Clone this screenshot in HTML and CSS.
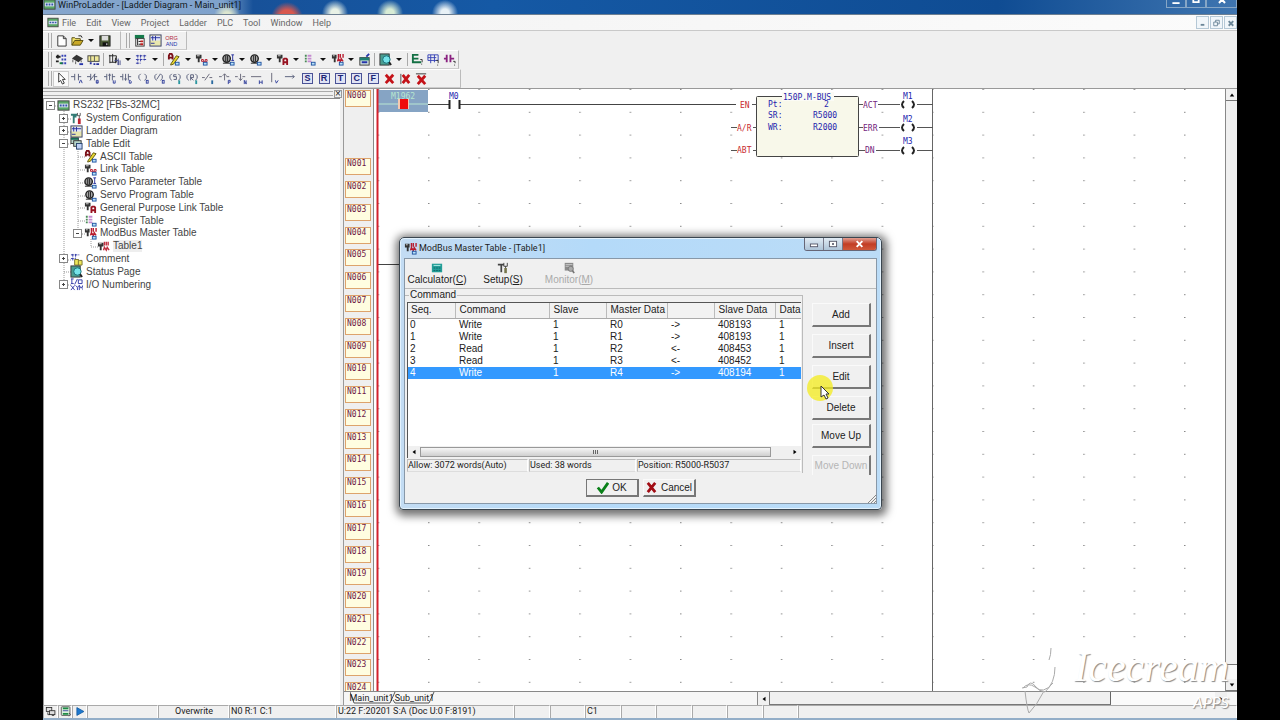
FILE: index.html
```html
<!DOCTYPE html>
<html lang="en">
<head>
<meta charset="utf-8">
<title>WinProLadder - [Ladder Diagram - Main_unit1]</title>
<link rel="stylesheet" href="styles.css">
</head>
<body>
<svg class="sprite" aria-hidden="true">
  <defs>
    <symbol id="plc" viewBox="0 0 14 14"><rect x="1" y="2" width="12" height="10" fill="#5aa868" stroke="#444"/><rect x="2" y="5" width="10" height="4" fill="#dfe6f4"/><path d="M3 7h8" stroke="#3355aa" stroke-width="2" stroke-dasharray="2 1"/></symbol>
    <symbol id="new" viewBox="0 0 14 14"><path d="M3 2h6l3 3v8H3z" fill="#fff" stroke="#333"/><path d="M9 2v3h3" fill="none" stroke="#333"/></symbol>
    <symbol id="open" viewBox="0 0 14 14"><path d="M1 12V4h3l1 1h5v2" fill="#f3e36b" stroke="#554d10"/><path d="M1 12l3-5h9l-3 5z" fill="#c9a927" stroke="#554d10"/><path d="M8 2h3l1 2" fill="none" stroke="#222"/></symbol>
    <symbol id="save" viewBox="0 0 14 14"><rect x="2" y="2" width="11" height="11" fill="#4a5a35" stroke="#222"/><rect x="4" y="2" width="7" height="5" fill="#dcdcdc"/><rect x="5" y="9" width="6" height="4" fill="#111"/><rect x="9" y="10" width="1" height="2" fill="#fff"/></symbol>
    <symbol id="project" viewBox="0 0 14 14"><rect x="2" y="1" width="10" height="4" fill="#157a4b"/><rect x="3" y="5" width="9" height="8" fill="#fff" stroke="#333"/><path d="M5 5v7M6 8h3M6 11h3" stroke="#111"/><path d="M8 8h3M8 11h3" stroke="#c12020" stroke-width="2"/></symbol>
    <symbol id="ladder" viewBox="0 0 14 14"><rect x="1" y="1" width="12" height="12" fill="#e8e6ad" stroke="#333a66"/><rect x="2" y="2" width="10" height="5" fill="#dfe3fa"/><path d="M2 4h10M4 2v5M7 2v5M2 10h4" stroke="#26309c"/></symbol>
    <symbol id="mnemonic" viewBox="0 0 14 14"><text x="7" y="6" text-anchor="middle" font-size="6" fill="#b32a3c">ORG</text><text x="7" y="13" text-anchor="middle" font-size="6" fill="#2634aa">AND</text></symbol>
    <symbol id="netgrid" viewBox="0 0 14 14"><path d="M1 4h5M3 2v4M1 9h3" stroke="#222" stroke-width="2"/><path d="M7 3h6M7 7h6M7 11h6" stroke="#3440b4" stroke-width="2" stroke-dasharray="2 1"/><path d="M5 11h3" stroke="#15803d" stroke-width="2"/></symbol>
    <symbol id="chip" viewBox="0 0 14 14"><path d="M1 6l5-4 7 4-5 4z" fill="#333"/><path d="M2 7v3M5 9v3M11 8v2" stroke="#555"/><path d="M9 12h4" stroke="#2634aa" stroke-width="2"/></symbol>
    <symbol id="io" viewBox="0 0 14 14"><rect x="1" y="3" width="12" height="6" fill="#efe99a" stroke="#444"/><path d="M4 3v6M8 3v6" stroke="#555"/><path d="M3 11h2M7 12h2M10 12h3" stroke="#26309c" stroke-width="2"/></symbol>
    <symbol id="unit" viewBox="0 0 14 14"><path d="M2 2v9M1 3h8v7H2M5 1v9M8 5v6" fill="none" stroke="#222"/><path d="M7 8h4v5M11 6v7M13 8v5" fill="none" stroke="#444c88"/></symbol>
    <symbol id="rung" viewBox="0 0 14 14"><path d="M1 3h11M1 7h11M3 2v10M6 2v8M10 2v6M1 11h5" stroke="#3038a5" fill="none" stroke-dasharray="3 1"/></symbol>
    <symbol id="ascii" viewBox="0 0 14 14"><path d="M2 7V3l1-2h2l1 2v4M2 5h4" fill="none" stroke="#7b1018" stroke-width="2"/><path d="M4 12l6-9 3 1-6 8-3 1z" fill="#e6d631" stroke="#5d5510"/><rect x="9" y="10" width="4" height="3" fill="#b7e1f7" stroke="#2052a2"/></symbol>
    <symbol id="link" viewBox="0 0 14 14"><path d="M1 2h6v4H5v4H3V6H1z" fill="#333"/><path d="M2 3h3" stroke="#ddd"/><path d="M7 9V7h2v2M11 9V7h2v2" fill="none" stroke="#b81c2f"/><path d="M7 9h6" stroke="#b81c2f"/><rect x="9" y="10" width="4" height="3" fill="#b7e1f7" stroke="#2052a2"/></symbol>
    <symbol id="servoi" viewBox="0 0 14 14"><circle cx="5" cy="6" r="4" fill="#999" stroke="#222" stroke-width="1.500"/><path d="M4 3v6M6 3v6M1 11h8" stroke="#222"/><path d="M10 2h3M11.500 2v6M10 8h3" stroke="#26309c"/><rect x="9" y="10" width="4" height="3" fill="#b7e1f7" stroke="#2052a2"/></symbol>
    <symbol id="servo" viewBox="0 0 14 14"><circle cx="6" cy="6" r="4" fill="#aaa" stroke="#222" stroke-width="1.500"/><path d="M5 3v6M7 3v6M2 11h8" stroke="#222"/><rect x="9" y="10" width="4" height="3" fill="#b7e1f7" stroke="#2052a2"/></symbol>
    <symbol id="general" viewBox="0 0 14 14"><path d="M1 2h6v4H5v4H3V6H1z" fill="#333"/><path d="M2 3h3" stroke="#ddd"/><path d="M8 13V7l1-1h2l1 1v6M8 10h4" fill="none" stroke="#981221" stroke-width="2"/></symbol>
    <symbol id="register" viewBox="0 0 14 14"><path d="M2 3h2M2 6h2M2 9h2" stroke="#4a8a57" stroke-width="2"/><path d="M5 3h4M5 6h4M5 9h4" stroke="#c58ad0" stroke-width="2"/><rect x="9" y="10" width="4" height="3" fill="#b7e1f7" stroke="#2052a2"/></symbol>
    <symbol id="modbus" viewBox="0 0 14 14"><path d="M1 2h5v4H5v4H3V6H1z" fill="#333"/><path d="M2 3h2" stroke="#ddd"/><path d="M8 1v4M10 1v4M13 1v4M7 9l1-3 2 3 1-3 2 3" fill="none" stroke="#b81c2f" stroke-width="1.500"/><rect x="9" y="10" width="4" height="3" fill="#b7e1f7" stroke="#2052a2"/></symbol>
    <symbol id="modsmall" viewBox="0 0 14 14"><path d="M1 3h6v4H5v4H3V7H1z" fill="#333"/><path d="M2 4h3" stroke="#ddd"/><path d="M8 2v4M10 2v4M12 2v4M7 11l1-3 2 3 1-3 2 3" fill="none" stroke="#c03040" stroke-width="1.500"/></symbol>
    <symbol id="calcset" viewBox="0 0 14 14"><rect x="2" y="5" width="10" height="8" fill="#d7e7e3" stroke="#333"/><rect x="2" y="5" width="10" height="3" fill="#1e8072"/><path d="M9 4l3-3M4 10h6" stroke="#2634aa" stroke-width="2"/></symbol>
    <symbol id="status" viewBox="0 0 14 14"><rect x="1" y="1" width="10" height="12" fill="#4a9d90" stroke="#333"/><circle cx="8" cy="7" r="4" fill="#75e3e8" stroke="#176b76"/><path d="M11 10l2 3" stroke="#222" stroke-width="2"/></symbol>
    <symbol id="cmt" viewBox="0 0 14 14"><path d="M2 2h6M2 6h6M2 10h9M2 1v10" stroke="#147044" stroke-width="2"/><path d="M10 7h2v3M11 12h1" stroke="#333" fill="none"/></symbol>
    <symbol id="find" viewBox="0 0 14 14"><path d="M1 2h11v6H1zM4 2v9M8 2v8M1 5h9" fill="none" stroke="#3440b4"/><path d="M10 8h2v3M11 13h1" fill="none" stroke="#333"/></symbol>
    <symbol id="contact" viewBox="0 0 14 14"><path d="M1 6h3M4 2v8M8 2v8M8 6h4" stroke="#8a2180" stroke-width="2"/><path d="M11 9h2v2M12 13h1" fill="none" stroke="#333"/></symbol>
    <symbol id="pointer" viewBox="0 0 14 14"><path d="M4 1v10l2-2 2 4 2-1-2-4h3z" fill="#fff" stroke="#333"/></symbol>
    <symbol id="no" viewBox="0 0 14 14"><path d="M0 5h4M4 2v7M8 2v7M8 5h3" stroke="#555c78" fill="none"/><path d="M9 12l1-3h1l1 3" stroke="#32409c" fill="none"/></symbol>
    <symbol id="nc" viewBox="0 0 14 14"><path d="M0 5h4M4 2v7M8 2v7M8 5h3M3 9l6-7" stroke="#555c78" fill="none"/><path d="M10 9h2v3h-2zM10 11h2" stroke="#32409c" fill="none"/></symbol>
    <symbol id="up" viewBox="0 0 14 14"><path d="M0 5h3M3 2v7M6 2v7M9 2v7M9 5h3M5 4l1-2 1 2" stroke="#555c78" fill="none"/><path d="M10 9v3h2V9" stroke="#32409c" fill="none"/></symbol>
    <symbol id="down" viewBox="0 0 14 14"><path d="M0 5h3M3 2v7M6 2v7M9 2v7M9 5h3M5 7l1 2 1-2" stroke="#555c78" fill="none"/><path d="M10 9h1l1 1v2h-2z" stroke="#32409c" fill="none"/></symbol>
    <symbol id="coil" viewBox="0 0 14 14"><path d="M4 2L2 4v3l2 2M8 2l2 2v3L8 9" stroke="#555c78" fill="none"/><rect x="10" y="9" width="2" height="3" stroke="#32409c" fill="none"/></symbol>
    <symbol id="coilnot" viewBox="0 0 14 14"><path d="M4 2L2 4v3l2 2M8 2l2 2v3L8 9M4 8l4-6" stroke="#555c78" fill="none"/><rect x="10" y="9" width="2" height="3" stroke="#32409c" fill="none"/></symbol>
    <symbol id="coilset" viewBox="0 0 14 14"><path d="M3 2L1 4v3l2 2M10 2l2 2v3l-2 2M8 3H5v2h3v3H5" stroke="#555c78" fill="none"/><path d="M11 9v4" stroke="#2a97a0" stroke-width="2"/></symbol>
    <symbol id="coilreset" viewBox="0 0 14 14"><path d="M3 2L1 4v3l2 2M10 2l2 2v3l-2 2M5 9V3h3v3H5l3 3" stroke="#555c78" fill="none"/><path d="M11 9v4" stroke="#2a97a0" stroke-width="2"/></symbol>
    <symbol id="inv" viewBox="0 0 14 14"><path d="M0 6h3M3 9l5-7M8 6h3" stroke="#667" fill="none"/><path d="M11 9v4" stroke="#2a6aa0" stroke-width="2"/></symbol>
    <symbol id="pulse" viewBox="0 0 14 14"><path d="M0 5h3M8 5h3M6 9V2M4 4l2-2 2 2" stroke="#667" fill="none"/><path d="M10 13V9h2v2h-2" stroke="#32409c" fill="none"/></symbol>
    <symbol id="pulsed" viewBox="0 0 14 14"><path d="M0 5h3M8 5h3M6 9V2M4 7l2 2 2-2" stroke="#667" fill="none"/><path d="M10 13V9l2 4V9" stroke="#32409c" fill="none"/></symbol>
    <symbol id="hline" viewBox="0 0 14 14"><path d="M0 5h11" stroke="#667"/><path d="M9 9v4M12 9v4M9 11h3" stroke="#32409c"/></symbol>
    <symbol id="vline" viewBox="0 0 14 14"><path d="M4 1v10" stroke="#667"/><path d="M8 9l1 3 2-3" stroke="#32409c" fill="none"/></symbol>
    <symbol id="arrow" viewBox="0 0 14 14"><path d="M1 5h10M9 3l2 2-2 2" stroke="#555c78" fill="none"/></symbol>
    <symbol id="cross" viewBox="0 0 14 14"><path d="M3 3l8 9M11 3l-8 9" stroke="#c41218" stroke-width="3"/></symbol>
    <symbol id="crossv" viewBox="0 0 14 14"><path d="M2 2v11" stroke="#444"/><path d="M4 3l7 9M11 3l-7 9" stroke="#c41218" stroke-width="3"/></symbol>
    <symbol id="crossh" viewBox="0 0 14 14"><path d="M1 2h11" stroke="#333"/><path d="M3 4l8 9M11 4l-8 9" stroke="#c41218" stroke-width="3"/></symbol>
    <symbol id="config" viewBox="0 0 14 14"><path d="M1 3h7M4 3v9M6 3v3" stroke="#347c76" stroke-width="2"/><path d="M8 1v3h3V1M10 4v4" stroke="#555" fill="none"/><path d="M10 7v6" stroke="#bd2330" stroke-width="3"/></symbol>
    <symbol id="tables" viewBox="0 0 14 14"><rect x="1" y="1" width="8" height="6" fill="#b8d5ca" stroke="#333"/><path d="M1 2h8" stroke="#176b58" stroke-width="2"/><rect x="4" y="4" width="8" height="6" fill="#b8d5ca" stroke="#333"/><rect x="7" y="7" width="6" height="6" fill="#bfd0f4" stroke="#26426f"/></symbol>
    <symbol id="comment" viewBox="0 0 14 14"><path d="M1 2h9M3 1v8M6 1v5M1 6h5" stroke="#3038a5" stroke-dasharray="3 1"/><path d="M5 7h4l1 1h3v5H5zM9 7v6" fill="#eee75a" stroke="#77702b"/></symbol>
    <symbol id="ionum" viewBox="0 0 14 14"><path d="M1 1h3M2 1v5M1 6h3M5 7l3-6M9 2h4v4H9zM1 8l4 5M5 8l-4 5M6 8l2 2 2-2M8 10v3M10 13V8l2 3 2-3v5" stroke="#3038a5" fill="none"/></symbol>
    <symbol id="calc" viewBox="0 0 14 14"><rect x="1" y="2" width="12" height="10" fill="#239e98"/><path d="M3 4h8" stroke="#bff5ef"/><path d="M3 7h8M3 10h8" stroke="#085f62" stroke-dasharray="2 1"/></symbol>
    <symbol id="setup" viewBox="0 0 14 14"><path d="M1 3h7M5 3v9" stroke="#444" stroke-width="2"/><path d="M8 1v4h4V1M10 5v2" stroke="#333" fill="none"/><path d="M10 7v6" stroke="#76754b" stroke-width="3"/></symbol>
    <symbol id="monitor" viewBox="0 0 14 14"><rect x="2" y="1" width="10" height="9" fill="#8b8b8b"/><path d="M3 3h8M3 5h5" stroke="#ccc"/><circle cx="9" cy="8" r="3" fill="#aaa" stroke="#777"/><path d="M11 10l2 3" stroke="#777" stroke-width="2"/></symbol>
    <symbol id="tick" viewBox="0 0 14 14"><path d="M2 7l4 5 7-10" fill="none" stroke="#098018" stroke-width="3"/></symbol>
    <symbol id="ex" viewBox="0 0 14 14"><path d="M3 2l8 10M11 2L3 12" stroke="#a10c14" stroke-width="3"/></symbol>
    <symbol id="net" viewBox="0 0 14 14"><rect x="1" y="2" width="7" height="5" fill="#ddd" stroke="#222"/><rect x="5" y="6" width="7" height="5" fill="#ddd" stroke="#222"/><path d="M3 8v3h2M8 12h3" stroke="#222" fill="none"/></symbol>
    <symbol id="online" viewBox="0 0 14 14"><rect x="1" y="1" width="11" height="11" rx="1" fill="#d9efdc" stroke="#444"/><path d="M3 3h7M3 10h7" stroke="#1d8a45" stroke-width="2"/><path d="M3 6h7" stroke="#26309c"/><path d="M11 9l2 2-2 2" stroke="#333" fill="none"/></symbol>
    <symbol id="play" viewBox="0 0 14 14"><path d="M3 2l9 5-9 5z" fill="#1d78cf" stroke="#135a9f"/></symbol>
  </defs>
</svg>

<div class="app">
  <header class="titlebar">
    <svg class="icon"><use href="#plc"/></svg>
    <h1 class="title">WinProLadder - [Ladder Diagram - Main_unit1]</h1>
    <div class="caption">
      <button aria-label="Minimize"><svg viewBox="0 0 20 10"><path d="M6 4h8" stroke="#fff" stroke-width="2"/></svg></button>
      <button aria-label="Maximize"><svg viewBox="0 0 20 10"><path d="M7 -3h6v6H7z" fill="none" stroke="#fff" stroke-width="2"/></svg></button>
      <button class="wide" aria-label="Close"><svg viewBox="0 0 20 10"><path d="M7 -3l6 7M13 -3l-6 7" stroke="#fff" stroke-width="2"/></svg></button>
    </div>
  </header>

  <nav class="menubar">
    <svg class="icon"><use href="#plc"/></svg>
    <button>File</button><button>Edit</button><button>View</button><button>Project</button><button>Ladder</button><button>PLC</button><button>Tool</button><button>Window</button><button>Help</button>
    <div class="child-caption">
      <button aria-label="Minimize child"><svg viewBox="0 0 12 12"><path d="M4 8h4" stroke="#6b8698" stroke-width="2"/></svg></button>
      <button aria-label="Restore child"><svg viewBox="0 0 12 12"><path d="M3 5h4v4H3zM5 5V3h4v4H7" fill="none" stroke="#6b8698"/></svg></button>
      <button aria-label="Close child"><svg viewBox="0 0 12 12"><path d="M4 4l5 5M9 4l-5 5" stroke="#6b8698" stroke-width="2"/></svg></button>
    </div>
  </nav>

  <div class="toolbars">
    <div class="bar-row">
      <div class="bar bar-file">
        <i class="grip"></i>
        <button class="tool" aria-label="New"><svg><use href="#new"/></svg></button>
        <button class="tool" aria-label="Open"><svg><use href="#open"/></svg></button><button class="drop" aria-label="Recent"></button>
        <button class="tool" aria-label="Save"><svg><use href="#save"/></svg></button>
      </div>
      <div class="bar">
        <i class="grip"></i>
        <button class="tool" aria-label="Project"><svg><use href="#project"/></svg></button>
        <button class="tool" aria-label="Ladder"><svg><use href="#ladder"/></svg></button>
        <button class="tool" aria-label="Mnemonic"><svg><use href="#mnemonic"/></svg></button>
      </div>
    </div>
    <div class="bar-row">
      <div class="bar bar-tables">
        <i class="grip"></i>
        <button class="tool" aria-label="Configuration"><svg><use href="#netgrid"/></svg></button>
        <button class="tool" aria-label="Memory"><svg><use href="#chip"/></svg></button>
        <button class="tool" aria-label="I/O"><svg><use href="#io"/></svg></button>
        <i class="sep"></i>
        <button class="tool" aria-label="Unit"><svg><use href="#unit"/></svg></button><button class="drop" aria-label="Unit list"></button>
        <button class="tool" aria-label="Network"><svg><use href="#rung"/></svg></button><button class="drop" aria-label="Network list"></button>
        <i class="sep"></i>
        <button class="tool" aria-label="ASCII"><svg><use href="#ascii"/></svg></button><button class="drop" aria-label="ASCII list"></button>
        <button class="tool" aria-label="Link"><svg><use href="#link"/></svg></button><button class="drop" aria-label="Link list"></button>
        <button class="tool" aria-label="Servo parameter"><svg><use href="#servoi"/></svg></button><button class="drop" aria-label="Servo parameter list"></button>
        <button class="tool" aria-label="Servo program"><svg><use href="#servo"/></svg></button><button class="drop" aria-label="Servo program list"></button>
        <button class="tool" aria-label="General link"><svg><use href="#general"/></svg></button><button class="drop" aria-label="General link list"></button>
        <button class="tool" aria-label="Register"><svg><use href="#register"/></svg></button><button class="drop" aria-label="Register list"></button>
        <button class="tool" aria-label="ModBus"><svg><use href="#modbus"/></svg></button><button class="drop" aria-label="ModBus list"></button>
        <button class="tool" aria-label="Calculator"><svg><use href="#calcset"/></svg></button>
        <i class="sep"></i>
        <button class="tool" aria-label="Status page"><svg><use href="#status"/></svg></button><button class="drop" aria-label="Status list"></button>
        <i class="sep"></i>
        <button class="tool" aria-label="Comment"><svg><use href="#cmt"/></svg></button>
        <button class="tool" aria-label="Find network"><svg><use href="#find"/></svg></button>
        <button class="tool" aria-label="Find element"><svg><use href="#contact"/></svg></button>
      </div>
    </div>
    <div class="bar-row">
      <div class="bar bar-elements">
        <i class="grip"></i>
        <div class="elements">
          <button class="tool pressed" aria-label="Select"><svg><use href="#pointer"/></svg></button>
          <button class="tool" aria-label="Contact A"><svg><use href="#no"/></svg></button>
          <button class="tool" aria-label="Contact B"><svg><use href="#nc"/></svg></button>
          <button class="tool" aria-label="Contact up"><svg><use href="#up"/></svg></button>
          <button class="tool" aria-label="Contact down"><svg><use href="#down"/></svg></button>
          <button class="tool" aria-label="Coil"><svg><use href="#coil"/></svg></button>
          <button class="tool" aria-label="Inverse coil"><svg><use href="#coilnot"/></svg></button>
          <button class="tool" aria-label="Set coil"><svg><use href="#coilset"/></svg></button>
          <button class="tool" aria-label="Reset coil"><svg><use href="#coilreset"/></svg></button>
          <button class="tool" aria-label="Invert"><svg><use href="#inv"/></svg></button>
          <button class="tool" aria-label="Rising"><svg><use href="#pulse"/></svg></button>
          <button class="tool" aria-label="Falling"><svg><use href="#pulsed"/></svg></button>
          <button class="tool" aria-label="Horizontal"><svg><use href="#hline"/></svg></button>
          <button class="tool" aria-label="Vertical"><svg><use href="#vline"/></svg></button>
          <button class="tool" aria-label="Extend"><svg><use href="#arrow"/></svg></button>
          <button class="tool letter">S</button>
          <button class="tool letter">R</button>
          <button class="tool letter">T</button>
          <button class="tool letter">C</button>
          <button class="tool letter">F</button>
          <button class="tool" aria-label="Delete"><svg><use href="#cross"/></svg></button>
          <button class="tool" aria-label="Delete vertical"><svg><use href="#crossv"/></svg></button>
          <button class="tool" aria-label="Delete horizontal"><svg><use href="#crossh"/></svg></button>
        </div>
      </div>
    </div>
  </div>

  <main class="work">
    <aside class="dock">
      <div class="dock-head"><i class="dock-grip"></i><button aria-label="Close pane">×</button></div>
      <div class="tree-pane">
        <svg class="guides" aria-hidden="true"><path d="M11 7h6M20 12v174M20 20h8M20 33h8M20 45h8M20 161h8M20 173h8M20 186h8M34 50v85M34 58h8M34 71h8M34 84h8M34 97h8M34 109h8M34 122h8M34 135h8M47 140v8M47 148h8"/></svg>
        <ul class="tree">
          <li><b class="box minus"></b><svg><use href="#plc"/></svg><span>RS232 [FBs-32MC]</span></li>
          <li class="l1"><b class="box plus"></b><svg><use href="#config"/></svg><span>System Configuration</span></li>
          <li class="l1"><b class="box plus"></b><svg><use href="#ladder"/></svg><span>Ladder Diagram</span></li>
          <li class="l1"><b class="box minus"></b><svg><use href="#tables"/></svg><span>Table Edit</span></li>
          <li class="l2"><b></b><svg><use href="#ascii"/></svg><span>ASCII Table</span></li>
          <li class="l2"><b></b><svg><use href="#link"/></svg><span>Link Table</span></li>
          <li class="l2"><b></b><svg><use href="#servoi"/></svg><span>Servo Parameter Table</span></li>
          <li class="l2"><b></b><svg><use href="#servo"/></svg><span>Servo Program Table</span></li>
          <li class="l2"><b></b><svg><use href="#general"/></svg><span>General Purpose Link Table</span></li>
          <li class="l2"><b></b><svg><use href="#register"/></svg><span>Register Table</span></li>
          <li class="l2"><b class="box minus"></b><svg><use href="#modbus"/></svg><span>ModBus Master Table</span></li>
          <li class="l3"><b></b><svg><use href="#modsmall"/></svg><span class="current">Table1</span></li>
          <li class="l1"><b class="box plus"></b><svg><use href="#comment"/></svg><span>Comment</span></li>
          <li class="l1"><b></b><svg><use href="#status"/></svg><span>Status Page</span></li>
          <li class="l1"><b class="box plus"></b><svg><use href="#ionum"/></svg><span>I/O Numbering</span></li>
        </ul>
      </div>
    </aside>

    <section class="editor">
      <div class="sheet">
        <div class="rownums">
          <ol class="rows">
            <li class="first"><span>N000</span></li><li><span>N001</span></li><li><span>N002</span></li><li><span>N003</span></li><li><span>N004</span></li><li><span>N005</span></li><li><span>N006</span></li><li><span>N007</span></li><li><span>N008</span></li><li><span>N009</span></li><li><span>N010</span></li><li><span>N011</span></li><li><span>N012</span></li><li><span>N013</span></li><li><span>N014</span></li><li><span>N015</span></li><li><span>N016</span></li><li><span>N017</span></li><li><span>N018</span></li><li><span>N019</span></li><li><span>N020</span></li><li><span>N021</span></li><li><span>N022</span></li><li><span>N023</span></li><li><span>N024</span></li>
          </ol>
        </div>
        <svg class="diagram" role="img" aria-label="Ladder diagram">
          <defs><pattern id="dots" x="54" y="0" width="50.4" height="22.8" patternUnits="userSpaceOnUse"><rect x="0" y="0" width="1.5" height="1" fill="#888"/></pattern></defs>
          <rect width="100%" height="100%" fill="url(#dots)"/>
          <rect x="4" y="1" width="50" height="22" fill="#86a4c4"/>
          <path d="M4 15h50" stroke="#b9e6d2"/>
          <rect x="24" y="10" width="11" height="10" fill="#f6c9b0"/><rect x="26" y="10" width="8" height="10" fill="#ee0c0c"/>
          <path d="M54 15.5h21M86 15.5h276M3 175.500h30" stroke="#444"/>
          <path d="M75.500 11v9M85.500 11v9" stroke="#222" stroke-width="2"/>
          <path d="M3.500 0v2000" stroke="#d3202c" stroke-width="2"/>
          <path d="M558.500 0v2000" stroke="#666" stroke-width="1"/>
          <rect x="382.500" y="7.500" width="102" height="60" rx="1" fill="#f8f8ea" stroke="#444"/>
          <rect x="408" y="3" width="52" height="9" fill="#fbfbf5"/>
          <path d="M378 15.500h5M357 38.500h6M379 38.500h4M357 61.500h6M379 61.500h4" stroke="#555"/>
          <path d="M485 15.500h4M504 15.500h22M485 38.500h4M505 38.500h21M485 61.500h6M502 61.500h24M543 15.500h16M543 38.500h16M543 61.500h16" stroke="#555"/>
          <path d="M530 12q-4 3.500 0 7M538 12q4 3.500 0 7M530 35q-4 3.500 0 7M538 35q4 3.500 0 7M530 58q-4 3.500 0 7M538 58q4 3.500 0 7" fill="none" stroke="#222" stroke-width="2"/>
          <g class="blue">
            <text x="75" y="10">M0</text><text x="409" y="11">150P.M-BUS</text>
            <text x="394" y="18">Pt:</text><text x="450" y="18">2</text>
            <text x="394" y="29">SR:</text><text x="439" y="29">R5000</text>
            <text x="394" y="41">WR:</text><text x="439" y="41">R2000</text>
            <text x="529" y="10">M1</text><text x="529" y="33">M2</text><text x="529" y="55">M3</text>
          </g>
          <text class="mint" x="17" y="10">M1962</text>
          <g class="red"><text x="366" y="19">EN</text><text x="363" y="42">A/R</text><text x="363" y="64">ABT</text></g>
          <g class="violet"><text x="489" y="19">ACT</text><text x="489" y="42">ERR</text><text x="491" y="64">DN</text></g>
        </svg>
        <div class="vscroll"><button aria-label="Scroll up"><svg viewBox="0 0 8 8"><path d="M1 6l3-4 3 4z"/></svg></button><div class="thumb"></div><div class="track"></div><button aria-label="Scroll down"><svg viewBox="0 0 8 8"><path d="M1 2l3 4 3-4z"/></svg></button></div>
      </div>
      <div class="sheet-foot">
        <div class="tabs">
          <button><svg viewBox="0 0 46 12" aria-hidden="true"><path d="M0 0l4 11h36L45 0" /></svg><span>Main_unit1</span></button>
          <button><svg viewBox="0 0 46 12" aria-hidden="true"><path d="M0 8l2 3h34L41 0"/></svg><span>Sub_unit1</span></button>
        </div>
        <div class="hscroll"><button aria-label="Scroll left"><svg viewBox="0 0 8 8"><path d="M6 1L2 4l4 3z"/></svg></button><div class="thumb"></div><div class="track"></div><button class="flat" aria-label="Scroll right"><svg viewBox="0 0 8 8"><path d="M2 1l4 3-4 3z"/></svg></button></div>
      </div>
    </section>
  </main>

  <footer class="status">
    <span><svg><use href="#net"/></svg></span><span><svg><use href="#online"/></svg></span><span><svg><use href="#play"/></svg></span>
    <span></span><span class="mid">Overwrite</span><span>N0 R:1 C:1</span><span>U:22 F:20201 S:A (Doc U:0 F:8191)</span>
    <span></span><span></span><span>C1</span><span></span><span></span><span></span><span></span><span></span><span></span>
  </footer>

  <div class="dialog" role="dialog" aria-labelledby="dlg-title">
    <div class="dlg-title">
      <svg class="icon"><use href="#modbus"/></svg>
      <h2 id="dlg-title">ModBus Master Table - [Table1]</h2>
      <div class="dlg-caption">
        <button aria-label="Minimize dialog"><svg viewBox="0 0 20 12"><rect x="6" y="6" width="8" height="3" fill="#fff" stroke="#556"/></svg></button>
        <button aria-label="Maximize dialog"><svg viewBox="0 0 20 12"><rect x="6" y="3" width="8" height="6" fill="#fff" stroke="#556"/><rect x="9" y="5" width="2" height="2" fill="#556"/></svg></button>
        <button class="close" aria-label="Close dialog"><svg viewBox="0 0 20 12"><path d="M7 3l6 6M13 3l-6 6" stroke="#fff" stroke-width="2"/></svg></button>
      </div>
    </div>
    <div class="client">
      <div class="dlg-tools">
        <button><svg><use href="#calc"/></svg><span>Calculator(<u>C</u>)</span></button>
        <button><svg><use href="#setup"/></svg><span>Setup(<u>S</u>)</span></button>
        <button disabled><svg><use href="#monitor"/></svg><span>Monitor(<u>M</u>)</span></button>
      </div>
      <div class="dlg-body">
        <fieldset class="group">
          <legend>Command</legend>
          <div class="list">
            <table>
              <colgroup><col class="c1"><col class="c2"><col class="c3"><col class="c4"><col class="c5"><col class="c6"><col></colgroup>
              <thead><tr><th>Seq.</th><th>Command</th><th>Slave</th><th>Master Data</th><th></th><th>Slave Data</th><th>Data</th></tr></thead>
              <tbody>
                <tr><td>0</td><td>Write</td><td>1</td><td>R0</td><td>-&gt;</td><td>408193</td><td>1</td></tr>
                <tr><td>1</td><td>Write</td><td>1</td><td>R1</td><td>-&gt;</td><td>408193</td><td>1</td></tr>
                <tr><td>2</td><td>Read</td><td>1</td><td>R2</td><td>&lt;-</td><td>408453</td><td>1</td></tr>
                <tr><td>3</td><td>Read</td><td>1</td><td>R3</td><td>&lt;-</td><td>408452</td><td>1</td></tr>
                <tr class="selected"><td>4</td><td>Write</td><td>1</td><td>R4</td><td>-&gt;</td><td>408194</td><td>1</td></tr>
              </tbody>
            </table>
            <div class="list-scroll"><button aria-label="List left"><svg viewBox="0 0 8 8"><path d="M6 1L2 4l4 3z"/></svg></button><div class="list-thumb"><i></i></div><div class="list-track"></div><button aria-label="List right"><svg viewBox="0 0 8 8"><path d="M2 1l4 3-4 3z"/></svg></button></div>
          </div>
          <div class="usage"><span>Allow: 3072 words(Auto)</span><span>Used: 38 words</span><span>Position: R5000-R5037</span></div>
        </fieldset>
        <div class="actions">
          <button>Add</button><button>Insert</button><button>Edit</button><button>Delete</button><button class="near">Move Up</button><button disabled>Move Down</button>
        </div>
      </div>
      <div class="confirm">
        <button class="default"><svg><use href="#tick"/></svg>OK</button>
        <button><svg><use href="#ex"/></svg>Cancel</button>
      </div>
      <svg class="resize" viewBox="0 0 8 8" aria-hidden="true"><path d="M0 8l8-8M3 8l5-5M6 8l2-2"/></svg>
    </div>
  </div>

  <svg class="cursor" viewBox="0 0 28 28" aria-hidden="true"><circle cx="14" cy="14" r="13" fill="#f4ec1c" fill-opacity=".75"/><path d="M15 12v11l3-2 2 4 2-1-2-4h3z" fill="#fff" stroke="#333"/></svg>

  <div class="watermark">
    <svg viewBox="0 0 40 68" aria-hidden="true"><path d="M31 1q0 7-2 12M35 20q0 16-10 25q-6-1-9-5q-6-8-9 0l-5 1M5 44q2 18 4 22q8-8 15-22M3 41q5-6 12-1q8 8 18-4"/></svg>
    <div class="brand"><span class="name">Icecream</span><span class="apps">APPS</span></div>
  </div>
</div>
</body>
</html>
```
FILE: styles.css
```css
* { box-sizing: border-box; }
body { margin: 0; background: #000; font: 10px/12px "Liberation Sans", Arial, sans-serif; color: #222; }
button { font: inherit; color: inherit; border: 0; padding: 0; margin: 0; background: none; display: flex; align-items: center; justify-content: center; }
svg { display: block; }
ul, ol { list-style: none; margin: 0; padding: 0; }
.sprite { position: absolute; width: 0; height: 0; }
.icon { width: 13px; height: 13px; flex: none; }

.app { position: relative; margin: 0 43px; height: 100vh; min-height: 720px; display: flex; flex-direction: column; background: #f0f0f0; overflow: hidden; border-bottom: 2px solid #93aec8; }

.titlebar { height: 15px; flex: none; display: flex; align-items: flex-start; gap: 2px; overflow: hidden; border-bottom: 1px solid #6c7f92;
  background:
    radial-gradient(circle at 244px 18px, #d8584e 0 8px, transparent 16px),
    radial-gradient(circle at 184px 16px, #dce6cf 0 4px, transparent 13px),
    radial-gradient(circle at 292px 13px, #e8f1e6 0 4px, transparent 13px),
    radial-gradient(circle at 347px 13px, #d8ecd5 0 4px, transparent 13px),
    radial-gradient(circle at 402px 13px, #e8f1f6 0 4px, transparent 13px),
    linear-gradient(90deg, #86a6cd 0, #7fa2cc 180px, #175199 210px, #1559a5 450px, #0f4c93 80%, #3f75b0); }
.titlebar .icon { margin-top: -2px; }
.title { margin: 0; font: 9px/10px Roboto, "Noto Sans", sans-serif; color: #101820; white-space: nowrap; }
.caption { margin-left: auto; display: flex; }
.caption button { width: 20px; height: 8px; border: 1px solid #86a6c6; border-top: 0; }
.caption .wide { width: 31px; }
.caption svg { width: 20px; height: 10px; }

.menubar { height: 16px; flex: none; display: flex; align-items: center; padding-left: 4px; background: linear-gradient(90deg, #f2f2f2, #fbfbfb); border-bottom: 1px solid #c9c9c9; font: 9px/12px Roboto, "Noto Sans", sans-serif; color: #666; }
.menubar .icon { width: 12px; margin-right: -2px; }
.menubar > button { padding: 0 5px; }
.child-caption { margin-left: auto; display: flex; gap: 1px; }
.child-caption button { width: 13px; height: 13px; border: 1px solid #b5c8d6; background: #f1f6fa; }
.child-caption svg { width: 12px; height: 12px; }

.toolbars { flex: none; height: 58px; display: grid; grid-template-rows: repeat(3, 19px); border-bottom: 1px solid #999; }
.bar-row { display: flex; }
.bar { display: flex; align-items: center; padding: 0 7px 0 5px; border-right: 1px solid #bbb; border-bottom: 1px solid #ccc; border-top: 1px solid #fff; }
.bar-file { padding-right: 8px; }
.grip { width: 4px; height: 15px; flex: none; margin-right: 1px; border-left: 1px solid #aaa; border-right: 1px solid #aaa; }
.bar .tool { width: 16px; height: 16px; flex: none; }
.tool svg { width: 13px; height: 13px; }
.drop { width: 11px; height: 16px; flex: none; }
.drop::after { content: ""; border: 3px solid transparent; border-top-color: #111; border-bottom: 0; }
.sep { width: 1px; height: 13px; margin: 0 2px; background: #aaa; flex: none; }
.bar-tables { width: 416px; padding-right: 0; justify-content: space-between; }
.bar-elements { width: 418px; padding-right: 30px; }
.elements { flex: 1; display: flex; justify-content: space-between; }
.pressed { background: #fafafa; border: 1px solid #ccc; }
.bar .letter { width: 11px; height: 11px; margin: 0 2px 0 3px; align-self: center; border: 1px solid #4a5296; background: #dfe3f5; color: #1c2472; font: bold 9px/9px "Liberation Sans", Arial, sans-serif; }

.work { flex: 1; min-height: 0; display: flex; }
.dock { width: 300px; flex: none; display: flex; flex-direction: column; }
.dock-head { height: 9px; flex: none; display: flex; align-items: center; gap: 1px; }
.dock-grip { flex: 1; height: 5px; border-top: 1px solid #aaa; border-bottom: 1px solid #aaa; }
.dock-head button { width: 8px; height: 8px; margin-right: 1px; border: 1px solid #999; line-height: 6px; }
.tree-pane { position: relative; flex: 1; margin-right: 3px; background: #fff; border-top: 1px solid #888; border-left: 1px solid #999; }
.guides { position: absolute; left: 0; top: 0; width: 60px; height: 192px; }
.guides path { fill: none; stroke: #999; stroke-dasharray: 1 1; }
.tree { position: relative; display: grid; grid-template-rows: repeat(15, minmax(0, 1fr)); height: 192px; color: #444; }
.tree li { display: flex; align-items: center; white-space: nowrap; }
.tree .l1 { padding-left: 13px; }
.tree .l2 { padding-left: 27px; }
.tree .l3 { padding-left: 40px; }
.tree b { width: 13px; flex: none; display: flex; justify-content: center; }
.box::before { content: ""; width: 7px; height: 7px; border: 1px solid #888; background: linear-gradient(#444, #444) center / 3px 1px no-repeat, #fff; }
.plus::before { background: linear-gradient(#444, #444) center / 3px 1px no-repeat, linear-gradient(#444, #444) center / 1px 3px no-repeat, #fff; }
.tree svg { width: 13px; height: 13px; flex: none; margin-right: 3px; }
.current { background: #eee; }

.editor { flex: 1; min-width: 0; display: flex; flex-direction: column; border-left: 1px solid #999; }
.sheet { flex: 1; min-height: 0; display: flex; background: #fff; border-bottom: 1px solid #888; }
.rownums { width: 30px; flex: none; overflow: hidden; background: #efefef; border-right: 1px solid #888; }
.rows { height: 616px; display: grid; grid-template-rows: repeat(27, minmax(0, 1fr)); padding: 1px 0 0 1px; }
.rows .first { grid-row: span 3; }
.rows span { display: block; width: 26px; height: 17px; padding-left: 1px; border: 1px solid #dda36c; background: #fffde0; color: #6e1747; font: 8px/9px "DejaVu Sans Mono", monospace; }
.diagram { flex: 1; min-width: 0; height: 100%; font: 8px "DejaVu Sans Mono", monospace; }
.blue { fill: #2424ae; }
.mint { fill: #b7e7cf; }
.red { fill: #c92a2f; }
.violet { fill: #74257e; }

.vscroll { width: 12px; flex: none; display: flex; flex-direction: column; border-left: 1px solid #888; background: #f8f8f8; }
.vscroll button, .hscroll button { background: #f0f0f0; flex: none; }
.vscroll button { height: 12px; border-bottom: 1px solid #777; }
.vscroll svg, .hscroll svg, .list-scroll svg { width: 6px; height: 6px; }
.vscroll .thumb { flex: 566; border-bottom: 1px solid #777; background: #f0f0f0; }
.vscroll .track { flex: 14; }
.sheet-foot { height: 13px; flex: none; display: flex; background: #f6f6f6; }
.tabs { flex: 408; display: flex; padding-left: 6px; font: 9px/11px Roboto, "Noto Sans", sans-serif; }
.tabs button { position: relative; width: 43px; height: 12px; }
.tabs svg { position: absolute; left: 0; top: 0; width: 46px; height: 12px; }
.tabs path { fill: none; stroke: #555; }
.tabs span { position: relative; }
.hscroll { flex: 480; display: flex; border-left: 1px solid #888; }
.hscroll button { width: 12px; border-right: 1px solid #777; }
.hscroll .flat { border: 0; margin-right: 10px; }
.hscroll .thumb { flex: 341; background: #f0f0f0; border-right: 1px solid #666; border-bottom: 1px solid #777; }
.hscroll .track { flex: 104; background: #fafafa; }

.status { height: 13px; flex: none; display: grid; grid-template-columns: 15px 14px 15px 71px 71px 107px 178px repeat(4, 36px 35px) 1fr; font: 9px/11px Roboto, "Noto Sans", sans-serif; }
.status span { border-left: 1px solid #aaa; border-top: 1px solid #aaa; border-right: 1px solid #fff; padding-left: 1px; white-space: nowrap; overflow: hidden; }
.status svg { width: 12px; height: 11px; }
.status .mid { text-align: center; }

.dialog { position: absolute; left: 356px; top: 237px; width: 483px; height: 273px; display: flex; flex-direction: column; padding: 0 4px 5px; border: 1px solid #3b4650; border-radius: 5px 5px 4px 4px; background: linear-gradient(90deg, #c3dcf3, #b4daf9 40%, #bbdcf7); box-shadow: inset 0 0 0 1px #e3f2fd, 1px 2px 9px 4px rgba(0, 0, 0, .55); }
.dlg-title { height: 20px; flex: none; display: flex; align-items: center; gap: 2px; }
.dlg-title h2 { margin: 0; flex: 1; font: 9px/12px Roboto, "Noto Sans", sans-serif; color: #222; }
.dlg-caption { align-self: flex-start; display: flex; border: 1px solid #667; border-top: 0; border-radius: 0 0 3px 3px; overflow: hidden; }
.dlg-caption button { width: 19px; height: 12px; background: linear-gradient(#e1ebf4, #adc3d7); border-right: 1px solid #778; }
.dlg-caption svg { width: 19px; height: 12px; }
.dlg-caption .close { width: 33px; border: 0; background: linear-gradient(#e2a093, #c23d24 50%, #d0583a); }
.client { position: relative; flex: 1; min-height: 0; display: flex; flex-direction: column; border: 1px solid #8898a8; background: #f0f0f0; }
.dlg-tools { height: 30px; flex: none; display: flex; padding-left: 4px; border-bottom: 1px solid #bbb; }
.dlg-tools button { width: 56px; margin-right: 10px; flex-direction: column; justify-content: flex-start; padding-top: 3px; white-space: nowrap; }
.dlg-tools svg { width: 12px; height: 12px; }
.dlg-tools button:disabled { color: #aaa; }
.dlg-body { flex: 1; display: flex; gap: 9px; }
.group { flex: 1; min-width: 0; margin: 0; padding: 0 1px 0 2px; border: 1px solid #bbb; border-left: 0; border-bottom: 0; height: 184px; }
.group legend { padding: 0 1px; margin-left: 2px; line-height: 12px; }
.list { height: 156px; margin-top: 1px; display: flex; flex-direction: column; border-top: 1px solid #555; border-left: 1px solid #555; background: #fff; }
.list table { width: 100%; table-layout: fixed; border-collapse: collapse; }
.c1 { width: 47px; } .c2 { width: 94px; } .c3 { width: 57px; } .c4 { width: 61px; } .c5 { width: 47px; } .c6 { width: 61px; }
.list th { height: 15px; padding: 0 0 0 4px; text-align: left; font-weight: normal; background: #f2f2f2; border-right: 1px solid #bbb; border-bottom: 1px solid #aaa; white-space: nowrap; }
.list th:first-child { padding-left: 3px; }
.list th:last-child { border-right: 0; }
.list td { height: 12px; padding: 0 0 0 4px; line-height: 12px; }
.list td:first-child { padding-left: 2px; }
.selected { background: #3399ff; color: #fff; }
.list-scroll { margin-top: auto; height: 12px; display: flex; background: #f0f0f0; }
.list-scroll button { width: 12px; }
.list-thumb { flex: 352; margin: 1px 0; border: 1px solid #999; background: linear-gradient(#f6f6f6, #cfcfcf); display: flex; align-items: center; justify-content: center; }
.list-thumb i { width: 5px; height: 4px; border-left: 1px solid #666; border-right: 1px solid #666; background: linear-gradient(#666, #666) center / 1px 4px no-repeat; }
.list-track { flex: 18; }
.usage { height: 13px; margin-top: 1px; display: grid; grid-template-columns: 121px 107px 1fr; gap: 1px; font: 9px/11px Roboto, "Noto Sans", sans-serif; }
.usage span { border: 1px solid #bbb; border-right-color: #fff; border-bottom-color: #ddd; white-space: nowrap; }
.actions { width: 59px; flex: none; margin: 14px 5px 0 0; display: flex; flex-direction: column; gap: 7px; }
.actions button { height: 24px; flex: none; border: 1px solid #fafafa; border-right: 2px solid #777; border-bottom: 2px solid #777; }
.actions .near { margin-top: -3px; }
.actions button:disabled { height: 20px; color: #b5b5b5; border-bottom: 0; }
.confirm { flex: none; display: flex; justify-content: center; gap: 4px; margin: 0 0 6px; }
.confirm button { width: 53px; height: 18px; gap: 3px; border: 1px solid #fafafa; border-right: 2px solid #777; border-bottom: 2px solid #777; }
.confirm .default { border-top-color: #777; border-left-color: #777; }
.confirm svg { width: 13px; height: 13px; }
.resize { position: absolute; right: 0; bottom: 0; width: 8px; height: 8px; }
.resize path { stroke: #888; }

.cursor { position: absolute; left: 763px; top: 374px; width: 28px; height: 28px; }
.watermark { position: absolute; right: 8px; bottom: 3px; height: 72px; display: flex; align-items: flex-end; gap: 14px; color: #fff; }
.watermark svg { width: 40px; height: 68px; fill: none; stroke: #aaa; }
.brand { display: flex; flex-direction: column; padding-bottom: 3px; text-shadow: 1px 1px 1px #888; }
.name { font: italic 42px/49px "Liberation Serif", serif; }
.apps { align-self: flex-end; font: italic 16px/20px "Lato", sans-serif; }
```
